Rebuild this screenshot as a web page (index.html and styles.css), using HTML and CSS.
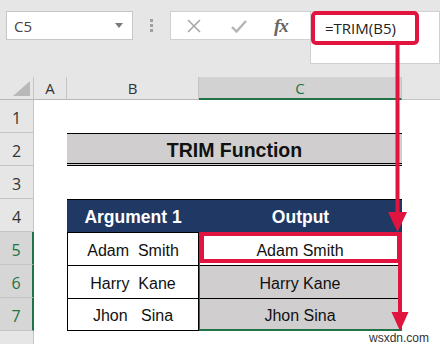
FILE: index.html
```html
<!DOCTYPE html>
<html>
<head>
<meta charset="utf-8">
<link rel="stylesheet" href="styles.css">
</head>
<body>
<div class="app">
  <div class="toolbar">
    <div class="namebox"><span class="nb-text">C5</span><svg class="nb-caret" width="8" height="5" viewBox="0 0 8 5"><path d="M0 0H8L4 5Z" fill="#7a7a7a"/></svg></div>
    <div class="dots"><i></i><i></i><i></i></div>
    <div class="fbtns">
      <svg class="ic-x" width="14" height="14" viewBox="0 0 14 14"><path d="M1 1L13 13M13 1L1 13" stroke="#a8a8a8" stroke-width="1.6" fill="none"/></svg>
      <svg class="ic-ok" width="16" height="14" viewBox="0 0 16 14"><path d="M1 8L5.5 12.5L15 2" stroke="#b4b4b4" stroke-width="2.4" fill="none"/></svg>
      <span class="fx">fx</span>
    </div>
    <div class="finput"><div class="fhl">=TRIM(B5)</div></div>
  </div>
  <div class="sheet">
    <div class="hd corner"><svg width="17" height="15" viewBox="0 0 17 15"><path d="M17 0V15H0Z" fill="#b9b9b9"/></svg></div>
    <div class="hd colh">A</div>
    <div class="hd colh">B</div>
    <div class="hd colh sel">C</div>
    <div class="hd colh last"></div>

    <div class="rh">1</div>
    <div class="rh">2</div>
    <div class="rh">3</div>
    <div class="rh">4</div>
    <div class="rh rsel">5</div>
    <div class="rh rsel">6</div>
    <div class="rh rsel">7</div>
    <div class="rh tail"></div>

    <div class="title">TRIM Function</div>

    <div class="tbl">
      <div class="th cb r1">Argument 1</div>
      <div class="th cc r1">Output</div>
      <div class="td b cb r2">Adam&nbsp;&nbsp;Smith</div>
      <div class="td c cc r2 white">Adam Smith</div>
      <div class="td b cb r3">Harry&nbsp;&nbsp;Kane</div>
      <div class="td c cc r3 gray">Harry Kane</div>
      <div class="td b cb r4 lastrow">Jhon&nbsp;&nbsp;&nbsp;Sina</div>
      <div class="td c cc r4 gray lastrow">Jhon Sina</div>
      <div class="selbox"></div>
      <div class="redbox"></div>
    </div>
  </div>
  <svg class="arrows" width="440" height="344" viewBox="0 0 440 344">
    <line x1="397.5" y1="43" x2="397.5" y2="216" stroke="#e0143e" stroke-width="4"/>
    <path d="M388 212L407 212L397.5 232Z" fill="#e0143e"/>
    <line x1="400" y1="232" x2="400" y2="316" stroke="#e0143e" stroke-width="4"/>
    <path d="M391.5 312L408.5 312L400 331Z" fill="#e0143e"/>
  </svg>
  <div class="wm">wsxdn.com</div>
</div>
</body>
</html>
```
FILE: styles.css
```css
* { box-sizing: border-box; }
html, body { margin: 0; padding: 0; }
body { width: 440px; height: 344px; overflow: hidden; background: #fff; font-family: "Liberation Sans", Arial, sans-serif; }
.app { position: relative; width: 440px; height: 344px; }

.toolbar {
  height: 77px;
  background: #e6e6e6;
  display: flex;
  align-items: flex-start;
  padding: 11px 0 0 6px;
}
.namebox {
  width: 127px; height: 29px;
  background: #fff;
  border: 1px solid #c6c6c6;
  display: flex; align-items: center; justify-content: space-between;
  padding: 0 9px 0 7px;
}
.nb-text { font-family: "Open Sans", sans-serif; font-size: 15px; color: #444; }
.dots { width: 37px; display: flex; flex-direction: column; align-items: center; gap: 2px; padding-top: 8px; }
.dots i { display: block; width: 3px; height: 3px; background: #a0a0a0; }
.fbtns {
  width: 140px; height: 29px;
  background: #fff;
  border: 1px solid #d0d0d0;
  border-right: none;
  display: flex; align-items: center;
  padding-left: 16px;
}
.ic-x { margin-right: 30px; }
.ic-ok { margin-right: 27px; }
.fx { font-family: "Liberation Serif", serif; font-style: italic; font-weight: bold; font-size: 19px; color: #666; letter-spacing: -1px; }
.finput {
  width: 130px; height: 53px;
  background: #fff;
  border: 1px solid #d0d0d0;
}
.fhl {
  width: 108px; height: 34px;
  margin: -1px 0 0 0;
  border: 4px solid #e0143e;
  border-radius: 5px;
  background: #fff;
  font-family: "Open Sans", sans-serif;
  font-size: 15px; color: #222;
  padding: 3px 0 0 10px;
}

.sheet {
  display: grid;
  grid-template-columns: 34px 33px 132px 203px 38px;
  grid-template-rows: 23px repeat(7, 33px) 13px;
  height: 267px;
}
.hd {
  grid-row: 1;
  background: #e6e6e6;
  border-right: 1px solid #c4c4c4;
  border-bottom: 1px solid #b8b8b8;
  display: flex; align-items: center; justify-content: center;
  font-size: 15px; color: #333;
  font-family: "Open Sans", sans-serif;
}
.corner { justify-content: flex-end; align-items: flex-end; padding: 0 3px 3px 0; }
.colh.sel { background: #d2d2d2; color: #217346; border-bottom: 2px solid #217346; }
.colh.last { border-right: none; border-bottom-color: #c4c4c4; }
.rh {
  grid-column: 1;
  background: #e6e6e6;
  border-right: 1px solid #c4c4c4;
  border-bottom: 1px solid #c4c4c4;
  display: flex; align-items: center; justify-content: center;
  font-family: "Open Sans", sans-serif;
  font-size: 16px; color: #333;
  padding-top: 3px;
}
.rh.rsel { background: #d6d6d6; color: #217346; border-right: 2px solid #217346; }
.rh.tail { border-bottom: none; }
.title {
  grid-column: 3 / 5; grid-row: 3;
  background: #d0cece;
  border-top: 1px solid #000;
  border-bottom: 3px double #000;
  display: flex; align-items: center; justify-content: center;
  font-weight: bold; font-size: 19.5px; color: #111;
  padding-top: 3px;
}
.tbl {
  grid-column: 3 / 5; grid-row: 5 / 9;
  display: grid;
  grid-template-columns: 132px 203px;
  grid-template-rows: repeat(4, 33px);
}
.cb { grid-column: 1; }
.cc { grid-column: 2; }
.r1 { grid-row: 1; }
.r2 { grid-row: 2; }
.r3 { grid-row: 3; }
.r4 { grid-row: 4; }
.th {
  background: #203864; color: #fff;
  font-weight: bold; font-size: 17.5px;
  display: flex; align-items: center; justify-content: center;
  border-top: 1px solid #000;
  padding-top: 2px;
}
.td {
  display: flex; align-items: center; justify-content: center;
  font-size: 16px; color: #111;
  border-top: 1px solid #000;
  padding-top: 3px;
}
.td.b { border-left: 1px solid #000; border-right: 1px solid #000; background: #fff; }
.td.lastrow { border-bottom: 1px solid #000; }
.td.c { border-right: 1px solid #000; }
.td.gray { background: #d0cece; }
.td.white { background: #fff; }
.selbox {
  grid-column: 2; grid-row: 2 / 5;
  border: 1px solid #217346;
  border-bottom-width: 2px;
}
.redbox {
  grid-column: 2; grid-row: 2;
  margin: 0 1px 2px 1px;
  border: 4px solid #e0143e;
}
.arrows { position: absolute; left: 0; top: 0; pointer-events: none; }
.wm {
  position: absolute; right: 11px; bottom: -1px;
  font-family: "Liberation Sans", sans-serif;
  font-size: 12px; color: #333;
  background: #fff;
}
```
